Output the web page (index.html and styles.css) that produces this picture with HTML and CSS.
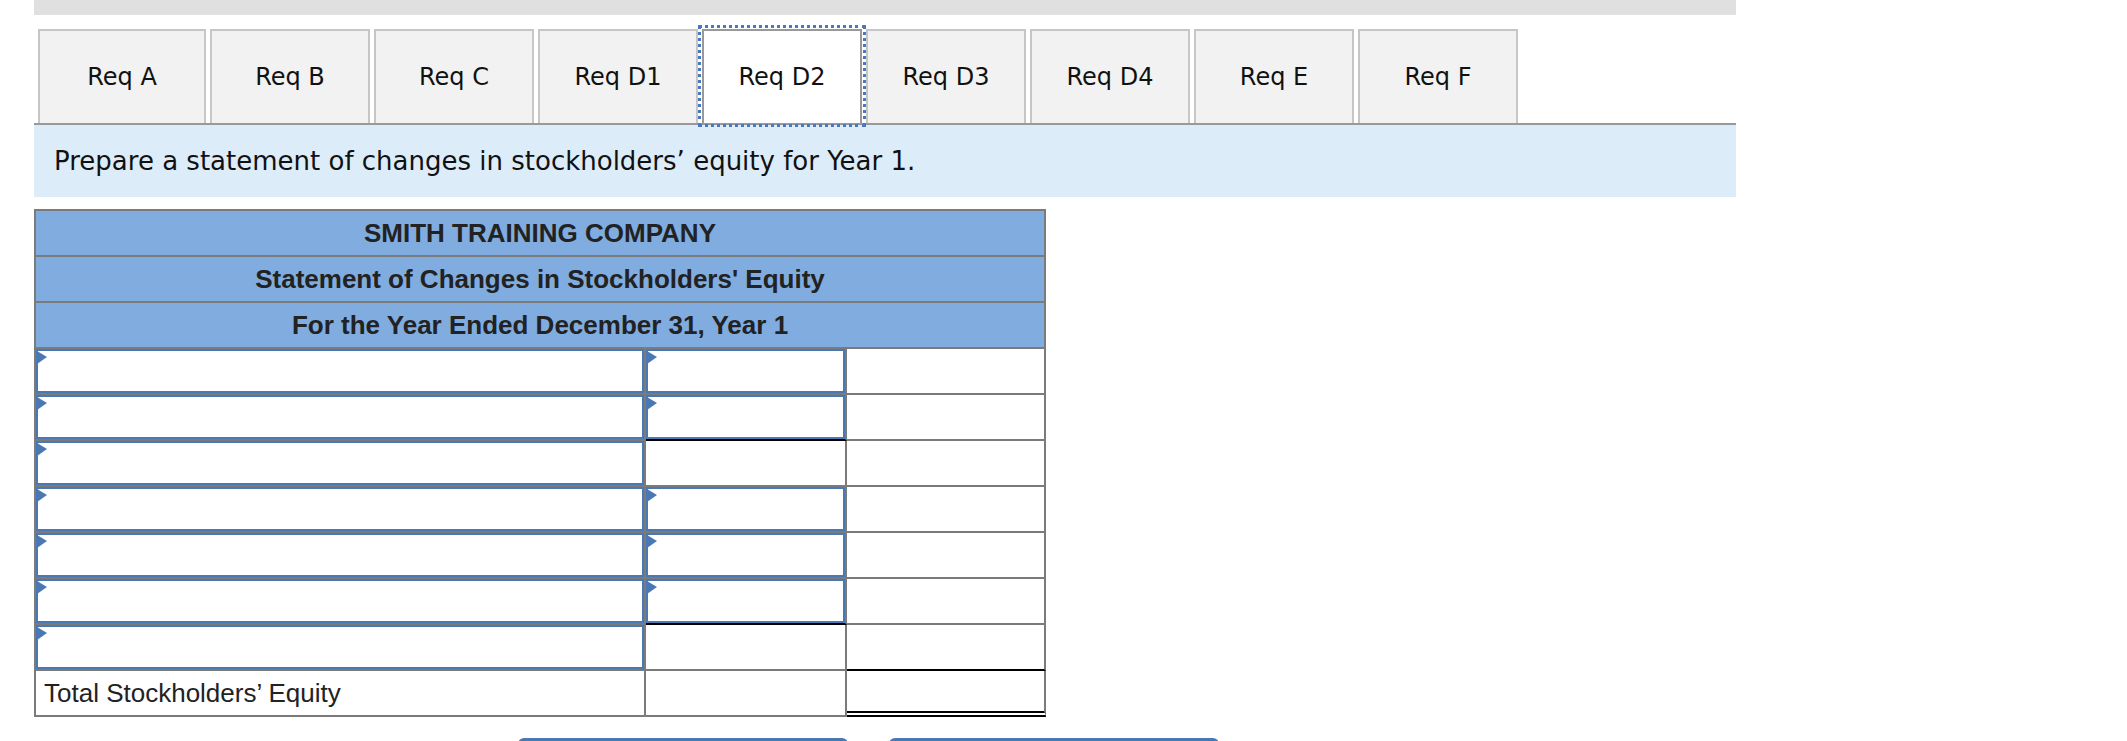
FILE: index.html
```html
<!DOCTYPE html>
<html lang="en">
<head>
    <meta charset="UTF-8">
    <meta name="viewport" content="width=device-width, initial-scale=1.0">
    <title>Req D2 - Statement of Changes in Stockholders' Equity</title>
    <link rel="stylesheet" href="styles.css">
</head>
<body>
    <div class="page">
        <div class="topbar"></div>

        <div class="tabs">
            <button class="tab tab-first">Req A</button>
            <button class="tab">Req B</button>
            <button class="tab">Req C</button>
            <button class="tab">Req D1</button>
            <button class="tab active">Req D2</button>
            <button class="tab">Req D3</button>
            <button class="tab">Req D4</button>
            <button class="tab">Req E</button>
            <button class="tab">Req F</button>
        </div>

        <div class="prompt">Prepare a statement of changes in stockholders’ equity for Year 1.</div>

        <div class="sheet">
            <div class="head">SMITH TRAINING COMPANY</div>
            <div class="head">Statement of Changes in Stockholders' Equity</div>
            <div class="head">For the Year Ended December 31, Year 1</div>

            <div class="cell flag"><input type="text"></div>
            <div class="cell flag"><input type="text"></div>
            <div class="cell"></div>

            <div class="cell flag"><input type="text"></div>
            <div class="cell flag rule"><input type="text"></div>
            <div class="cell"></div>

            <div class="cell flag"><input type="text"></div>
            <div class="cell"></div>
            <div class="cell"></div>

            <div class="cell flag"><input type="text"></div>
            <div class="cell flag"><input type="text"></div>
            <div class="cell"></div>

            <div class="cell flag"><input type="text"></div>
            <div class="cell flag"><input type="text"></div>
            <div class="cell"></div>

            <div class="cell flag"><input type="text"></div>
            <div class="cell flag rule"><input type="text"></div>
            <div class="cell"></div>

            <div class="cell flag"><input type="text"></div>
            <div class="cell"></div>
            <div class="cell rule"></div>

            <div class="cell label">Total Stockholders’ Equity</div>
            <div class="cell"></div>
            <div class="cell total"></div>
        </div>

        <div class="nav">
            <button class="btn-nav" aria-label="Previous: Req D1"></button>
            <button class="btn-nav" aria-label="Next: Req D3"></button>
        </div>
    </div>
</body>
</html>
```

FILE: styles.css
```css
body {
    margin: 0;
    height: 741px;
    overflow: hidden;
    background-color: #fff;
    font-family: "DejaVu Sans", Verdana, sans-serif;
    color: #111;
}

.page {
    width: 1702px;
    margin-left: 34px;
}

.topbar {
    height: 15px;
    background-color: #e0e0e0;
}

.tabs {
    display: flex;
    align-items: flex-end;
    gap: 4px;
    margin-top: 14px;
    padding-left: 4px;
    border-bottom: 2px solid #999;
}

.tab {
    box-sizing: border-box;
    width: 160px;
    height: 94px;
    margin: 0;
    padding: 0;
    background-color: #f2f2f2;
    border: 2px solid #c6c6c6;
    border-bottom: none;
    font-family: "DejaVu Sans", Verdana, sans-serif;
    font-size: 24px;
    color: #111;
    cursor: pointer;
}

.tab-first {
    width: 168px;
}

.tab.active {
    background-color: #fff;
    border-color: #999;
    outline: 3px dotted #4a78c0;
    outline-offset: 1px;
    position: relative;
    z-index: 1;
}

.prompt {
    display: flex;
    align-items: center;
    height: 72px;
    padding-left: 20px;
    background-color: #ddecf9;
    font-size: 26px;
}

.sheet {
    display: grid;
    grid-template-columns: 610px 201px 199px;
    grid-auto-rows: 46px;
    width: 1010px;
    margin-top: 12px;
    border-top: 2px solid #7b7b7b;
    border-left: 2px solid #7b7b7b;
    font-family: "Liberation Sans", Arial, sans-serif;
    color: #222;
}

.head {
    grid-column: 1 / -1;
    box-sizing: border-box;
    display: flex;
    align-items: center;
    justify-content: center;
    background-color: #80acdf;
    border-right: 2px solid #7b7b7b;
    border-bottom: 2px solid #7b7b7b;
    font-size: 26px;
    font-weight: bold;
}

.cell {
    position: relative;
    box-sizing: border-box;
    border-right: 2px solid #7b7b7b;
    border-bottom: 2px solid #7b7b7b;
    background-color: #fff;
}

.cell input {
    display: block;
    box-sizing: border-box;
    width: 100%;
    height: 100%;
    margin: 0;
    padding: 0 10px;
    border: 2px solid #4a78b5;
    background-color: #fff;
    font-family: "Liberation Sans", Arial, sans-serif;
    font-size: 26px;
}

.flag::before {
    content: "";
    position: absolute;
    left: 1px;
    top: 2px;
    border-left: 10px solid #4a78b5;
    border-top: 6px solid transparent;
    border-bottom: 7px solid transparent;
    z-index: 1;
}

.rule {
    border-bottom-color: #000;
}

.total {
    border-bottom: 6px double #000;
}

.label {
    display: flex;
    align-items: center;
    padding-left: 8px;
    font-size: 26px;
}

.nav {
    display: flex;
    gap: 41px;
    margin-top: 21px;
    padding-left: 484px;
}

.btn-nav {
    width: 330px;
    height: 50px;
    border: none;
    border-radius: 6px;
    background-color: #4a78b5;
}
```
